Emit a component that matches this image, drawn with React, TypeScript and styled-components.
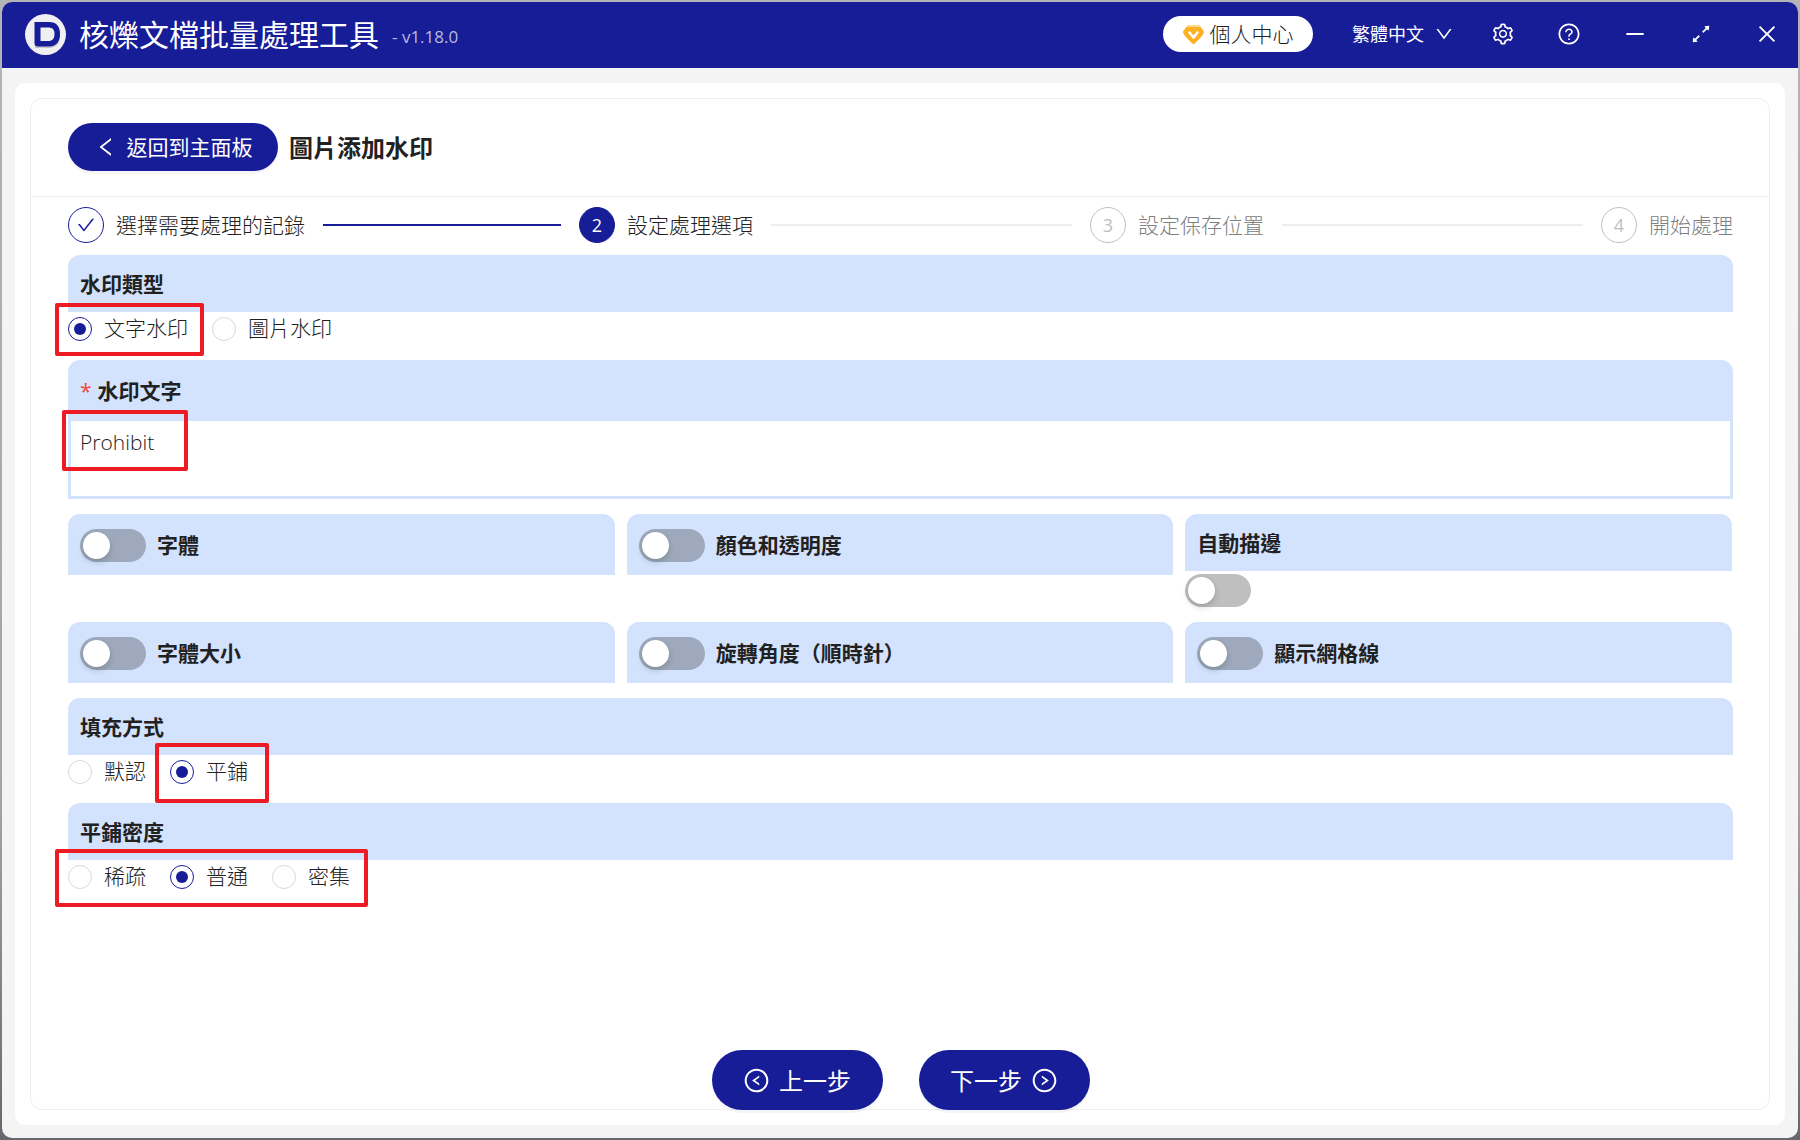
import React, { useId, useState } from "react";
import styled, { createGlobalStyle, css } from "styled-components";
import {
  AiOutlineArrowsAlt,
  AiOutlineCheck,
  AiOutlineClose,
  AiOutlineDown,
  AiOutlineLeft,
  AiOutlineLeftCircle,
  AiOutlineMinus,
  AiOutlineQuestionCircle,
  AiOutlineRightCircle,
  AiOutlineSetting,
} from "react-icons/ai";

const navy = "#171c97";
const panel = "#d3e2fd";
const ink = "#212121";
const line = "#eeeeee";

const GlobalStyle = createGlobalStyle`
  *, *::before, *::after { box-sizing: border-box; }
  body {
    margin: 0;
    font-family: "Open Sans", "Noto Sans CJK TC", sans-serif;
    font-size: 21px;
    font-weight: 300;
    line-height: 33px;
    color: ${ink};
  }
  button, input, select, textarea { font: inherit; color: inherit; margin: 0; }
  button { border: 0; padding: 0; background: none; cursor: pointer; }
`;

const Desktop = styled.div`
  display: flex;
  min-height: 100vh;
  padding: 2px;
  background: linear-gradient(#b4b4b6, #a4a4a8 70%, #66686e);
`;

const Window = styled.div`
  display: flex;
  flex-direction: column;
  flex: 1;
  min-width: 0;
  border-radius: 10px;
  overflow: hidden;
  background: #f4f4f4;
`;

const TitleBar = styled.header`
  display: flex;
  align-items: center;
  height: 66px;
  padding: 0 13px 2px 23px;
  background: ${navy};
  color: #fff;
`;

const AppName = styled.h1`
  margin: 2px 0 0 13px;
  font-size: 30px;
  font-weight: 400;
  line-height: 40px;
`;

const Version = styled.span`
  margin: 4px auto 0 13px;
  font-size: 17px;
  font-weight: 400;
  color: #b9bbdd;
`;

const Account = styled.button`
  && {
    display: flex;
    align-items: center;
    justify-content: center;
    gap: 6px;
    width: 150px;
    height: 36px;
    border-radius: 18px;
    background: #fff;
    color: ${ink};
  }
`;

const LanguageBox = styled.label`
  display: flex;
  align-items: center;
  gap: 10px;
  margin: 0 31px 0 39px;
  font-size: 18px;
  font-weight: 400;
`;

const Language = styled.select`
  appearance: none;
  border: 0;
  padding: 0;
  background: none;
  outline: none;
`;

const Tools = styled.nav`
  display: flex;
  gap: 30px;
`;

const Tool = styled.button`
  display: grid;
  place-items: center;
  width: 36px;
  height: 36px;
  font-size: 24px;
`;

const Card = styled.main`
  display: flex;
  flex: 1;
  margin: 15px 13px 13px;
  padding: 15px;
  border-radius: 10px;
  background: #fff;
`;

const Panel = styled.section`
  display: flex;
  flex-direction: column;
  flex: 1;
  min-width: 0;
  border: 1px solid ${line};
  border-radius: 12px;
`;

const PanelHead = styled.div`
  display: flex;
  align-items: center;
  gap: 11px;
  padding: 24px 36px 25px 37px;
  border-bottom: 1px solid ${line};
`;

const pill = css`
  display: flex;
  align-items: center;
  justify-content: center;
  gap: 9px;
  background: ${navy};
  color: #fff;
  box-shadow: 0 3px 0 rgba(5, 5, 90, 0.04);
`;

const BackButton = styled.button`
  && {
    ${pill}
    width: 210px;
    height: 48px;
    border-radius: 24px;
    font-weight: 400;
  }
`;

const PageTitle = styled.h2`
  margin: 0;
  font-size: 24px;
  font-weight: 700;
`;

const Body = styled.div`
  display: flex;
  flex-direction: column;
  flex: 1;
  padding: 10px 36px 0 37px;
`;

const Steps = styled.ol`
  display: flex;
  gap: 18px;
  margin: 0 0 12px;
  padding: 0;
  list-style: none;
`;

type StepState = "done" | "active" | "waiting";

const StepItem = styled.li<{ $state: StepState; $last: boolean }>`
  display: flex;
  align-items: center;
  flex: ${(p) => (p.$last ? "none" : "1 1 0")};
  gap: 12px;
  white-space: nowrap;
  color: ${(p) => (p.$state === "waiting" ? "#808080" : ink)};

  &::after {
    content: "";
    display: ${(p) => (p.$last ? "none" : "block")};
    flex: 1;
    height: 2px;
    margin-left: 6px;
    background: ${(p) => (p.$state === "done" ? navy : line)};
  }
`;

const StepDot = styled.span<{ $state: StepState }>`
  display: grid;
  place-items: center;
  width: 36px;
  height: 36px;
  border: 1px solid ${(p) => (p.$state === "waiting" ? "#bfbfbf" : navy)};
  border-radius: 50%;
  background: ${(p) => (p.$state === "active" ? navy : "#fff")};
  color: ${(p) => (p.$state === "active" ? "#fff" : p.$state === "done" ? navy : "#bfbfbf")};
  font-size: 18px;
  font-weight: 400;
`;

const Form = styled.form`
  display: flex;
  flex-direction: column;
  gap: 15px;
`;

const Field = styled.div`
  display: flex;
  flex-direction: column;
  min-width: 0;
`;

const FieldHead = styled.div<{ $tall?: boolean }>`
  display: flex;
  align-items: center;
  gap: 11px;
  height: ${(p) => (p.$tall ? 61 : 57)}px;
  padding: 2px 12px 0;
  border-radius: 12px 12px 0 0;
  background: ${panel};
  font-weight: 700;
`;

const Required = styled.span`
  margin-right: 6px;
  font-weight: 400;
  color: #f5483b;
`;

const Columns = styled.div`
  display: grid;
  grid-template-columns: repeat(3, 1fr);
  gap: 15px 12px;
  padding-right: 1px;
`;

const TextBoxWrap = styled.div`
  position: relative;
  display: flex;
`;

const TextBox = styled.textarea`
  flex: 1;
  height: 78px;
  padding: 5px 9px;
  border: 3px solid ${panel};
  border-top: 0;
  resize: none;
  outline: none;
  background: #fff;
`;

const Options = styled.div`
  position: relative;
  display: flex;
  gap: 24px;
  width: fit-content;
`;

const Option = styled.label`
  position: relative;
  display: flex;
  align-items: center;
  gap: 12px;
`;

const Radio = styled.input`
  appearance: none;
  display: grid;
  place-items: center;
  width: 24px;
  height: 24px;
  border: 1px solid #d9d9d9;
  border-radius: 50%;
  background: #fff;

  &:checked { border-color: ${navy}; }
  &:checked::before {
    content: "";
    width: 12px;
    height: 12px;
    border-radius: 50%;
    background: ${navy};
  }
`;

const Switch = styled.input`
  appearance: none;
  display: flex;
  align-items: center;
  width: 66px;
  height: 33px;
  padding: 0 3px;
  border-radius: 17px;
  background: rgba(0, 0, 0, 0.25);

  &:checked { justify-content: flex-end; background: ${navy}; }
  &::before {
    content: "";
    width: 27px;
    height: 27px;
    border-radius: 50%;
    background: #fff;
    box-shadow: 0 3px 6px rgba(0, 35, 11, 0.2);
  }
`;

const SwitchUnder = styled(Switch)`
  margin-top: 3px;
`;

const Highlight = styled.span<{ $inset: string; $width?: number }>`
  position: absolute;
  inset: ${(p) => p.$inset};
  width: ${(p) => (p.$width ? p.$width + "px" : "auto")};
  border: 4px solid #ed1c24;
  border-radius: 2px;
  pointer-events: none;
`;

const Footer = styled.footer`
  display: flex;
  justify-content: center;
  gap: 36px;
  margin: auto 0 -1px;
`;

const StepButton = styled.button`
  && {
    ${pill}
    width: 171px;
    height: 60px;
    border-radius: 30px;
    font-size: 24px;
    font-weight: 400;
  }
`;

const Logo = () => (
  <svg width="41" height="41" viewBox="0 0 41 41" aria-hidden="true">
    <circle cx="20.5" cy="20.5" r="20.5" fill="#f0f0f2" />
    <path d="M10 10h14.500c7 0 10.500 4.500 10.500 11.500s-3.500 12.500-10.500 12.500H10z" fill="#a9a9b4" opacity=".6" />
    <path
      d="M9.500 8H24c7.500 0 11 4.500 11 12s-3.500 12.500-11 12.500h-11c-2.500 0-3.500-1-3.500-3.500z"
      fill={navy}
    />
    <path d="M15.500 13.500H23c4.500 0 6.500 2 6.500 6.500s-2 7-6.500 7h-7.500z" fill="#f0f0f2" />
  </svg>
);

const Gem = () => (
  <svg width="21" height="21" viewBox="0 0 21 21" aria-hidden="true">
    <path d="M4.500 1.500h12L21 7.500c0 3.500-6 9-10.500 13C6 16.500 0 11 0 7.500z" fill="#fdb022" />
    <path d="M4.500 1.500h12l1 1.500h-14z" fill="#fed98b" />
    <path d="M6.500 8.500l4 5 4-5" fill="none" stroke="#fff" strokeWidth="2.600" strokeLinecap="round" strokeLinejoin="round" />
  </svg>
);

const steps: { title: string; state: StepState }[] = [
  { title: "選擇需要處理的記錄", state: "done" },
  { title: "設定處理選項", state: "active" },
  { title: "設定保存位置", state: "waiting" },
  { title: "開始處理", state: "waiting" },
];

const tools = [
  { label: "設定", Icon: AiOutlineSetting },
  { label: "說明", Icon: AiOutlineQuestionCircle },
  { label: "最小化", Icon: AiOutlineMinus },
  { label: "最大化", Icon: AiOutlineArrowsAlt },
  { label: "關閉", Icon: AiOutlineClose },
];

interface RadioFieldProps {
  title: string;
  options: string[];
  initial: string;
  highlighted?: string;
  highlightInset: string;
}

function RadioField({ title, options, initial, highlighted, highlightInset }: RadioFieldProps) {
  const name = useId();
  const [value, setValue] = useState(initial);
  return (
    <Field role="radiogroup" aria-labelledby={name + "title"}>
      <FieldHead id={name + "title"}>{title}</FieldHead>
      <Options>
        {options.map((option) => (
          <Option key={option}>
            <Radio type="radio" name={name} checked={value === option} onChange={() => setValue(option)} />
            {option}
            {highlighted === option && <Highlight $inset={highlightInset} />}
          </Option>
        ))}
        {!highlighted && <Highlight $inset={highlightInset} />}
      </Options>
    </Field>
  );
}

function SwitchField({ title }: { title: string }) {
  const id = useId();
  return (
    <Field>
      <FieldHead $tall>
        <Switch type="checkbox" role="switch" id={id} />
        <label htmlFor={id}>{title}</label>
      </FieldHead>
    </Field>
  );
}

export default function App() {
  const [text, setText] = useState("Prohibit");
  return (
    <>
      <GlobalStyle />
      <Desktop>
        <Window>
          <TitleBar>
            <Logo />
            <AppName>核爍文檔批量處理工具</AppName>
            <Version>- v1.18.0</Version>
            <Account type="button">
              <Gem />
              個人中心
            </Account>
            <LanguageBox>
              <Language aria-label="語言" defaultValue="zh-TW">
                <option value="zh-TW">繁體中文</option>
              </Language>
              <AiOutlineDown size={20} />
            </LanguageBox>
            <Tools>
              {tools.map(({ label, Icon }) => (
                <Tool key={label} type="button" aria-label={label}>
                  <Icon />
                </Tool>
              ))}
            </Tools>
          </TitleBar>
          <Card>
            <Panel>
              <PanelHead>
                <BackButton type="button">
                  <AiOutlineLeft size={24} />
                  返回到主面板
                </BackButton>
                <PageTitle>圖片添加水印</PageTitle>
              </PanelHead>
              <Body>
                <Steps>
                  {steps.map((step, i) => (
                    <StepItem key={step.title} $state={step.state} $last={i === steps.length - 1}>
                      <StepDot $state={step.state}>
                        {step.state === "done" ? <AiOutlineCheck size={20} /> : i + 1}
                      </StepDot>
                      {step.title}
                    </StepItem>
                  ))}
                </Steps>
                <Form>
                  <RadioField
                    title="水印類型"
                    options={["文字水印", "圖片水印"]}
                    initial="文字水印"
                    highlighted="文字水印"
                    highlightInset="-9px -16px -11px -13px"
                  />
                  <Field>
                    <FieldHead $tall as="label" htmlFor="watermark-text">
                      <span>
                        <Required>*</Required>水印文字
                      </span>
                    </FieldHead>
                    <TextBoxWrap>
                      <TextBox id="watermark-text" value={text} onChange={(e) => setText(e.target.value)} />
                      <Highlight $inset="-11px auto 28px -6px" $width={126} />
                    </TextBoxWrap>
                  </Field>
                  <Columns>
                    <SwitchField title="字體" />
                    <SwitchField title="顏色和透明度" />
                    <Field>
                      <FieldHead as="label" htmlFor="auto-outline">
                        自動描邊
                      </FieldHead>
                      <SwitchUnder type="checkbox" role="switch" id="auto-outline" />
                    </Field>
                    <SwitchField title="字體大小" />
                    <SwitchField title="旋轉角度（順時針）" />
                    <SwitchField title="顯示網格線" />
                  </Columns>
                  <RadioField
                    title="填充方式"
                    options={["默認", "平鋪"]}
                    initial="平鋪"
                    highlighted="平鋪"
                    highlightInset="-12px -21px -15px -15px"
                  />
                  <RadioField
                    title="平鋪密度"
                    options={["稀疏", "普通", "密集"]}
                    initial="普通"
                    highlightInset="-11px -18px -14px -13px"
                  />
                </Form>
                <Footer>
                  <StepButton type="button">
                    <AiOutlineLeftCircle size={27} />
                    上一步
                  </StepButton>
                  <StepButton type="button">
                    下一步
                    <AiOutlineRightCircle size={27} />
                  </StepButton>
                </Footer>
              </Body>
            </Panel>
          </Card>
        </Window>
      </Desktop>
    </>
  );
}
